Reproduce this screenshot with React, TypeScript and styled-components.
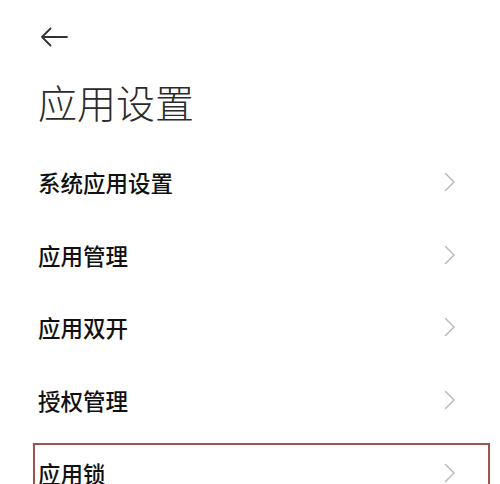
import React from "react";
import styled, { createGlobalStyle } from "styled-components";

const GlobalStyle = createGlobalStyle`
  html, body {
    margin: 0;
    padding: 0;
    background: #ffffff;
  }
  body {
    font-family: "Noto Sans CJK SC", "Noto Sans", sans-serif;
    color: #1a1a1a;
    overflow: hidden;
  }
`;

const items = [
    { label: "系统应用设置" },
    { label: "应用管理" },
    { label: "应用双开" },
    { label: "授权管理" },
    { label: "应用锁", marked: true },
];

const App = () => {
    return (
        <>
            <GlobalStyle />
            <Page>
                <Header>
                    <BackButton aria-label="返回">
                        <svg width="28" height="20" viewBox="0 0 28 20" fill="none">
                            <path d="M27 10H2M10.5 1.5L2 10L10.5 18.5" stroke="#333" strokeWidth="1.8" strokeLinecap="round" strokeLinejoin="round" />
                        </svg>
                    </BackButton>
                </Header>
                <Title>应用设置</Title>
                <List>
                    {items.map((item) => (
                        <Row key={item.label} $marked={!!item.marked}>
                            <Label>{item.label}</Label>
                            <Chevron>
                                <svg width="12" height="20" viewBox="0 0 12 20" fill="none">
                                    <path d="M1.5 1.5L10 10L1.5 18.5" stroke="#b5b5b5" strokeWidth="1.4" strokeLinecap="round" strokeLinejoin="round" />
                                </svg>
                            </Chevron>
                        </Row>
                    ))}
                </List>
            </Page>
        </>
    );
};

export default App;

const Page = styled.div`
  width: 500px;
  display: flex;
  flex-direction: column;
  padding: 0 44px 0 38px;
  box-sizing: border-box;
`;

const Header = styled.div`
  height: 74px;
  flex-shrink: 0;
  display: flex;
  align-items: center;
`;

const BackButton = styled.button`
  border: none;
  background: none;
  padding: 0;
  margin-left: 2px;
  display: flex;
  align-items: center;
  cursor: pointer;
`;

const Title = styled.h1`
  margin: 0;
  font-size: 39px;
  font-weight: 300;
  line-height: 54px;
  color: #2b2b2b;
`;

const List = styled.div`
  display: flex;
  flex-direction: column;
  margin-top: 18px;
`;

const Row = styled.div<{ $marked: boolean }>`
  display: flex;
  flex-shrink: 0;
  align-items: center;
  justify-content: space-between;
  box-sizing: border-box;
  height: ${(p) => (p.$marked ? "60px" : "72.5px")};
  margin: ${(p) => (p.$marked ? "7px -34px 0 -5px" : "0")};
  padding: ${(p) => (p.$marked ? "0 32px 0 3px" : "0")};
  border: ${(p) => (p.$marked ? "2px solid #a0524f" : "none")};
`;

const Label = styled.span`
  font-size: 22.5px;
  font-weight: 500;
  color: #111;
`;

const Chevron = styled.span`
  display: flex;
  align-items: center;
`;
